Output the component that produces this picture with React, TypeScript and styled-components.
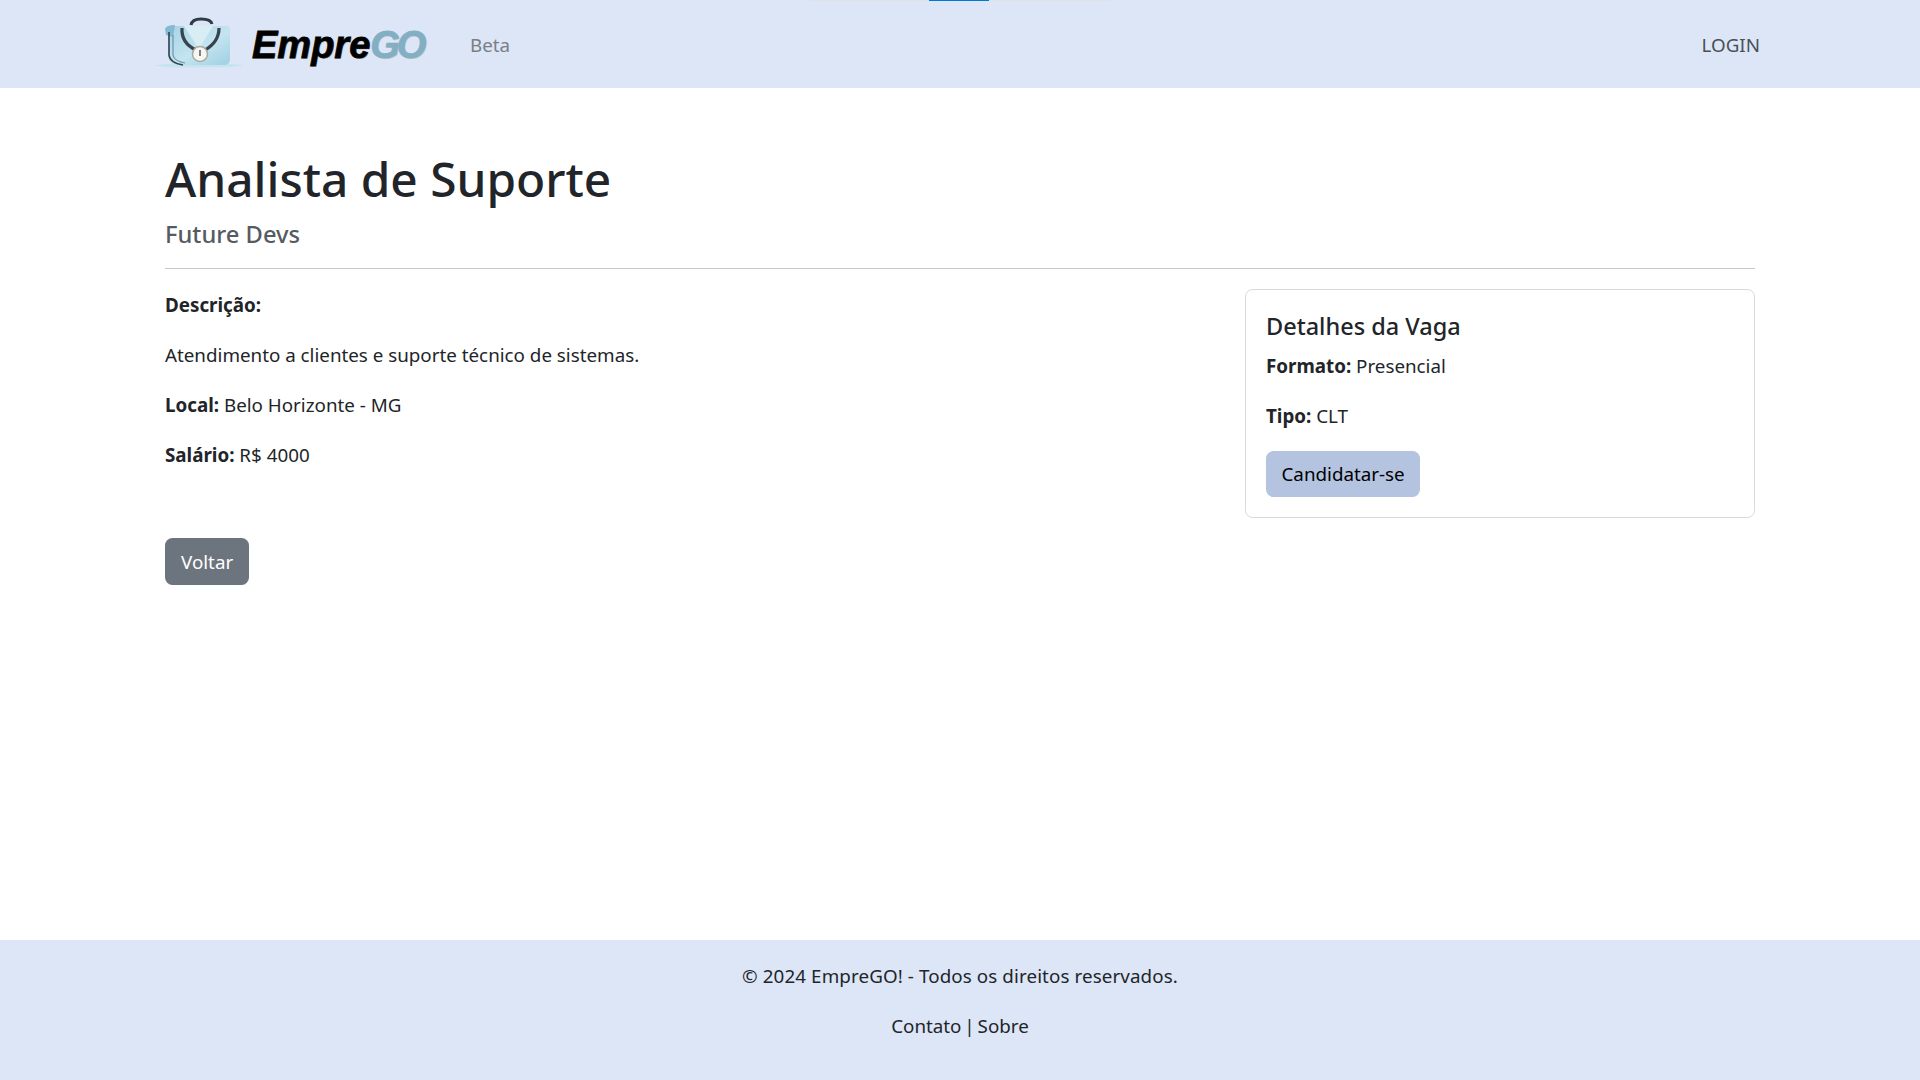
import React from "react";
import styled, { createGlobalStyle } from "styled-components";

const Global = createGlobalStyle`
  * { box-sizing: border-box; }
  html, body { margin: 0; padding: 0; background: #fff; }
  body { font-family: "Noto Sans", "Open Sans", sans-serif; font-size: 18.8px; line-height: 30px; color: #212529; }
`;
const Page = styled.div`min-height: 1080px; display: flex; flex-direction: column; position: relative;`;
const Progress = styled.div`position: absolute; top: 0; left: 810px; width: 300px; height: 1px; background: #e2e2e2;`;
const ProgressFill = styled.div`margin-left: 119px; width: 60px; height: 1px; background: #0078d7;`;
const Nav = styled.nav`height: 88px; background: #dde6f7; display: flex; align-items: center; padding: 1px 160px 0 155px;`;
const Brand = styled.a`display: flex; align-items: center; gap: 7px; width: 315px;`;
const LogoSvg = styled.svg`margin-top: -4px; flex: none;`;
const Wordmark = styled.span`font-family: "Liberation Sans", sans-serif; font-weight: 700; font-style: italic; font-size: 38px; line-height: 44px; color: #000; -webkit-text-stroke: 0.8px #000; text-shadow: 1px 1px 0 #c4c4c4;`;
const Go = styled.span`color: #82afc4; letter-spacing: -3px; -webkit-text-stroke: 0.8px #82afc4;`;
const Beta = styled.a`color: #7a7f85; flex: 1;`;
const Login = styled.a`color: #495057;`;
const Main = styled.main`flex: 1; padding: 61px 165px 0;`;
const Title = styled.h1`margin: 0 0 10px; font-size: 47.8px; line-height: 60px; font-weight: 500;`;
const Company = styled.h5`margin: 0 0 19px; font-size: 23.7px; line-height: 30px; font-weight: 500; color: #555b61;`;
const Rule = styled.hr`margin: 0 0 20px; border: 0; border-top: 1px solid #c9c9c9;`;
const Columns = styled.div`display: flex; align-items: flex-start; justify-content: space-between;`;
const Left = styled.section`width: 1030px; padding-top: 1px;`;
const Text = styled.p`margin: 0 0 20px;`;
const Card = styled.aside`width: 510px; border: 1px solid #d9d9d9; border-radius: 7.5px; padding: 21px 20px 20px;`;
const CardTitle = styled.h5`margin: 0 0 10px; font-size: 23.5px; line-height: 30px; font-weight: 500;`;
const Primary = styled.button`display: block; height: 46px; padding: 0 15.5px; border: 0; border-radius: 7.5px; background: #b4c4e0; color: #000; font: inherit;`;
const Back = styled.button`display: block; height: 47px; margin-top: 68px; padding: 0 16px; border: 0; border-radius: 7.5px; background: #6c757d; color: #fff; font: inherit;`;
const Footer = styled.footer`height: 140px; background: #dde6f7; padding-top: 21px; text-align: center;`;
const Copyright = styled.p`margin: 0 0 20px; letter-spacing: 0.1px;`;
const FooterLinks = styled.p`margin: 0; word-spacing: -2px;`;

const Logo = () => (
  <LogoSvg width="90" height="56" viewBox="0 0 90 56">
    <defs>
      <linearGradient id="bag" x1="0" y1="0" x2="1" y2="1">
        <stop offset="0" stopColor="#a6d3e6" />
        <stop offset="0.55" stopColor="#c4e4f0" />
        <stop offset="1" stopColor="#9fd0e3" />
      </linearGradient>
    </defs>
    <ellipse cx="44" cy="50.5" rx="44" ry="2" fill="#c6e4f0" />
    <path d="M13 18 Q13 11 20 11 H72 Q75 11 75 15 V44 Q75 50 69 50 H24 Q14 50 13 42 Z" fill="url(#bag)" />
    <path d="M29 11 L44 34 L58 11 Z" fill="#d9edf5" />
    <path d="M10 14 Q11 10 20 10 L18 22 L11 20 Z" fill="#83bad1" />
    <path d="M14 17 V40 Q15 48 28 50" fill="none" stroke="#33414d" strokeWidth="1.6" />
    <path d="M18 20 V40 Q19 46 30 48" fill="none" stroke="#6b93a8" strokeWidth="1.2" />
    <path d="M36 10 Q37 4 46 4 Q56 4 57 9" fill="none" stroke="#2f3b46" strokeWidth="3" />
    <path d="M27 13 Q26 28 41 35 M64 13 Q64 27 50 35" fill="none" stroke="#39434e" strokeWidth="3.2" />
    <circle cx="45" cy="39" r="7.5" fill="#f6f6f2" stroke="#a9a9a0" strokeWidth="1.5" />
    <path d="M45 35 V41" stroke="#333" strokeWidth="1.2" />
  </LogoSvg>
);

export default function App() {
  return (
    <Page>
      <Global />
      <Progress><ProgressFill /></Progress>
      <Nav>
        <Brand><Logo /><Wordmark>Empre<Go>GO</Go></Wordmark></Brand>
        <Beta>Beta</Beta>
        <Login>LOGIN</Login>
      </Nav>
      <Main>
        <Title>Analista de Suporte</Title>
        <Company>Future Devs</Company>
        <Rule />
        <Columns>
          <Left>
            <Text><strong>Descrição:</strong></Text>
            <Text>Atendimento a clientes e suporte técnico de sistemas.</Text>
            <Text><strong>Local:</strong> Belo Horizonte - MG</Text>
            <Text><strong>Salário:</strong> R$ 4000</Text>
            <Back>Voltar</Back>
          </Left>
          <Card>
            <CardTitle>Detalhes da Vaga</CardTitle>
            <Text><strong>Formato:</strong> Presencial</Text>
            <Text><strong>Tipo:</strong> CLT</Text>
            <Primary>Candidatar-se</Primary>
          </Card>
        </Columns>
      </Main>
      <Footer>
        <Copyright>© 2024 EmpreGO! - Todos os direitos reservados.</Copyright>
        <FooterLinks>Contato | Sobre</FooterLinks>
      </Footer>
    </Page>
  );
}
